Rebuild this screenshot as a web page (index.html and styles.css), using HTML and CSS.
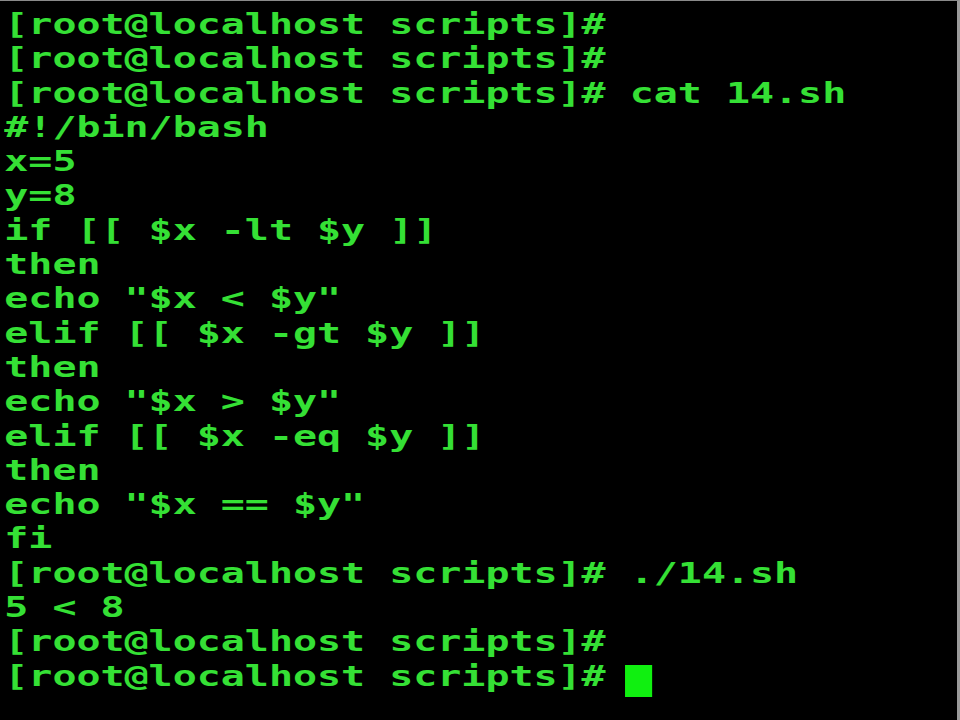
FILE: index.html
```html
<!DOCTYPE html>
<html lang="en">
<head>
<meta charset="utf-8">
<title>Terminal</title>
<link rel="stylesheet" href="styles.css">
</head>
<body>
<div class="screen">
<pre class="term">[root@localhost scripts]#
[root@localhost scripts]#
[root@localhost scripts]# cat 14.sh
#!/bin/bash
x=5
y=8
if [[ $x -lt $y ]]
then
echo "$x &lt; $y"
elif [[ $x -gt $y ]]
then
echo "$x &gt; $y"
elif [[ $x -eq $y ]]
then
echo "$x == $y"
fi
[root@localhost scripts]# ./14.sh
5 &lt; 8
[root@localhost scripts]#
[root@localhost scripts]# <span class="cursor"> </span></pre>
</div>
</body>
</html>
```

FILE: styles.css
```css
html, body {
  margin: 0;
  padding: 0;
  background: #000;
  width: 960px;
  height: 720px;
  overflow: hidden;
}

.screen {
  box-sizing: border-box;
  width: 960px;
  height: 720px;
  background: #000;
  border-top: 1px solid #8a8a8a;
  border-right: 3px solid #9a9a9a;
  overflow: hidden;
}

.term {
  margin: 0;
  padding: 7px 0 0 3px;
  font-family: "DejaVu Sans Mono", monospace;
  font-weight: bold;
  font-size: 28px;
  line-height: 34.3px;
  color: #35e035;
  transform: scaleX(1.427);
  transform-origin: 0 0;
  white-space: pre;
}

.cursor {
  display: inline-block;
  width: 19px;
  height: 32px;
  margin-left: -3px;
  vertical-align: -5px;
  background: #10f010;
}
```
